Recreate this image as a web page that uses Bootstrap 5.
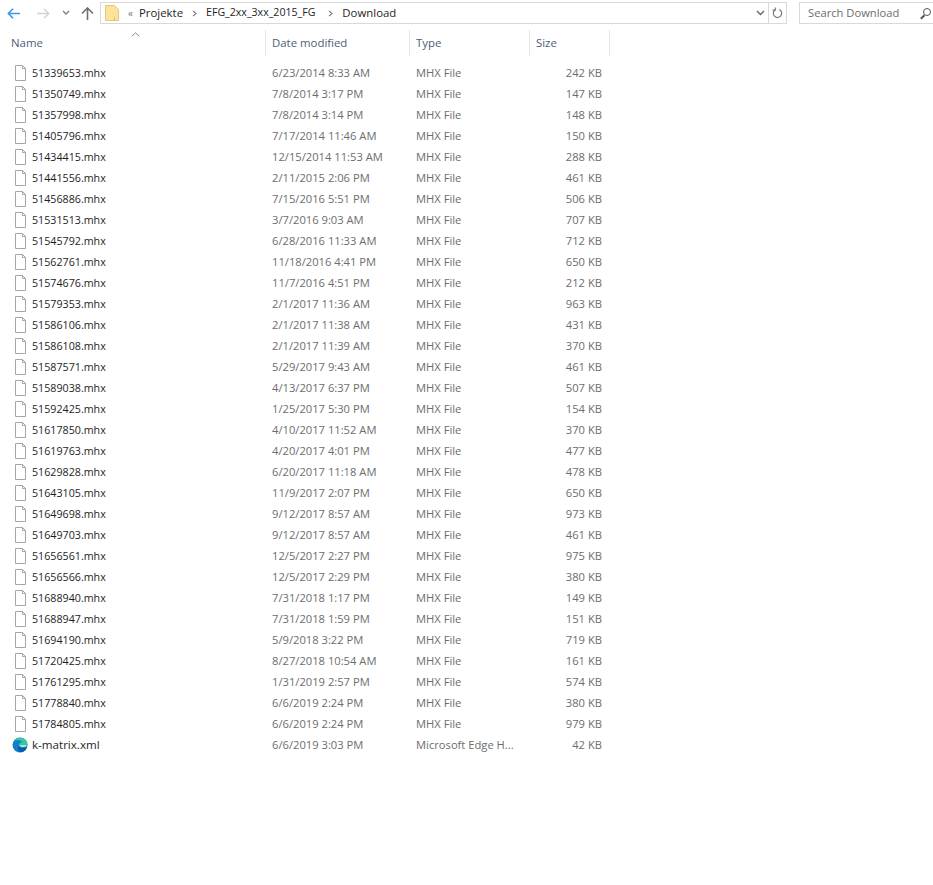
<!DOCTYPE html>
<html lang="en">
<head>
  <meta charset="UTF-8">
  <title>Download</title>
  <link href="https://cdn.jsdelivr.net/npm/bootstrap@5.3.3/dist/css/bootstrap.min.css" rel="stylesheet">
  <style>
    body {
      font-family: "Open Sans", "Noto Sans", sans-serif;
      font-size: 11.2px;
      color: #1e1e1e;
      background: #fff;
      overflow: hidden;
    }
    .toolbar { height: 26px; }
    .nav-btn { width: 20px; height: 21px; flex: none; }
    .nav-back { margin-left: 3px; }
    .nav-fwd { margin-left: 10px; }
    .nav-recent { width: 14px; margin-left: 6px; flex: none; }
    .nav-up { margin-left: 4px; }
    .addr-box {
      width: 687px; height: 22px; margin-left: 3px; padding-left: 4px; flex: none;
      border: 1px solid #d9d9d9; font-size: 11.4px;
    }
    .crumb-sep { color: #777; font-size: 10px; margin-left: 9px; margin-right: 6px; }
    .crumb-arrow { margin: 0 9px; }
    .crumb-long { font-size: 10.6px; margin-right: 4px; }
    .addr-tail { width: 34px; height: 100%; }
    .refresh-cell { width: 18px; height: 100%; border-left: 1px solid #d9d9d9; }
    .search-box {
      width: 134px; height: 22px; margin-left: 12px; padding-left: 8px; flex: none;
      border: 1px solid #d9d9d9; border-right: 0; color: #6d6d6d; font-size: 11.2px;
    }
    .search-text { width: 112px; flex: none; }
    .search-glyph { width: 11px; height: 11px; flex: none; position: relative; }
    .search-glyph::before {
      content: ""; position: absolute; right: 0; top: 0; width: 8px; height: 8px;
      border: 1.3px solid #555; border-radius: 50%;
    }
    .search-glyph::after {
      content: ""; position: absolute; left: 0; top: 8px; width: 5px; height: 1.6px;
      background: #555; transform: rotate(-45deg);
    }
    .head-row { height: 26px; margin-top: 4px; color: #4c607a; position: relative; font-size: 11.4px; }
    .sort-caret { position: absolute; left: 131px; top: 2px; }
    .col-name { width: 265px; padding-left: 11px; }
    .col-date { width: 144px; padding-left: 6px; border-left: 1px solid #e5e5e5; }
    .col-type { width: 120px; padding-left: 6px; border-left: 1px solid #e5e5e5; }
    .col-size { width: 81px; padding-left: 6px; border-left: 1px solid #e5e5e5; border-right: 1px solid #e5e5e5; }
    .head-row > div { height: 26px; line-height: 25px; }
    .file-list { margin-top: 6px; }
    .file-row { height: 21px; line-height: 21px; color: #6d6d6d; }
    .file-row .cell-name { width: 265px; padding-left: 12px; color: #1e1e1e; gap: 4px; font-size: 10.7px; }
    .file-row .cell-name span { padding-top: 1px; }
    .file-row .cell-name.wide-name { font-size: 11.6px; }
    .file-row .cell-name.wide-name span { padding-top: 0; }
    .file-row .cell-date { width: 144px; padding-left: 7px; }
    .file-row .cell-type { width: 120px; padding-left: 7px; }
    .file-row .cell-size { width: 73px; text-align: right; }
  </style>
</head>
<body>
  <div class="toolbar d-flex align-items-center">
    <div class="nav-btn nav-back d-flex align-items-center justify-content-center">
      <svg width="13" height="11" viewBox="0 0 13 11"><path d="M6 .7 1.300 5.500 6 10.300M2 5.500h11" fill="none" stroke="#3a97e6" stroke-width="1.5"/></svg>
    </div>
    <div class="nav-btn nav-fwd d-flex align-items-center justify-content-center">
      <svg width="13" height="11" viewBox="0 0 13 11"><path d="M7 .7l4.700 4.800L7 10.300M11 5.500H0" fill="none" stroke="#d4d4d4" stroke-width="1.5"/></svg>
    </div>
    <div class="nav-recent d-flex align-items-center justify-content-center">
      <svg width="8" height="6" viewBox="0 0 8 6"><path d="M1 1l3 3 3-3" fill="none" stroke="#7d7d7d" stroke-width="1.3"/></svg>
    </div>
    <div class="nav-btn nav-up d-flex align-items-center justify-content-center">
      <svg width="13" height="13" viewBox="0 0 13 13"><path d="M1 6.500 6.500 1 12 6.500M6.500 1.500V13" fill="none" stroke="#6f6f6f" stroke-width="1.6"/></svg>
    </div>
    <div class="addr-box d-flex align-items-center">
      <svg width="14" height="16" viewBox="0 0 14 16"><path d="M.5.500h9l4 4v11H.5z" fill="#fde39a" stroke="#e3c878"/><path d="M9.500 12.500v3" stroke="#e3b95c"/></svg>
      <span class="crumb-sep">&laquo;</span>
      <span>Projekte</span>
      <svg class="crumb-arrow" width="5" height="7" viewBox="0 0 5 7"><path d="M1 .8 4 3.500 1 6.200" fill="none" stroke="#777" stroke-width="1.1"/></svg>
      <span class="crumb-long">EFG_2xx_3xx_2015_FG</span>
      <svg class="crumb-arrow" width="5" height="7" viewBox="0 0 5 7"><path d="M1 .8 4 3.500 1 6.200" fill="none" stroke="#777" stroke-width="1.1"/></svg>
      <span>Download</span>
      <div class="addr-tail ms-auto d-flex align-items-center">
        <div class="flex-grow-1 d-flex justify-content-center">
          <svg width="9" height="6" viewBox="0 0 9 6"><path d="M1 1l3.500 3.500L8 1" fill="none" stroke="#666" stroke-width="1.4"/></svg>
        </div>
        <div class="refresh-cell d-flex align-items-center justify-content-center">
          <svg width="11" height="12" viewBox="0 0 11 12"><path d="M3.600 2.600A4.200 4.200 0 1 0 7.400 2.600M3.300 .4v2.800H.6" fill="none" stroke="#7a7a7a" stroke-width="1.2"/></svg>
        </div>
      </div>
    </div>
    <div class="search-box d-flex align-items-center">
      <span class="search-text">Search Download</span>
      <div class="search-glyph"></div>
    </div>
  </div>

  <div class="head-row d-flex">
    <svg class="sort-caret" width="9" height="5" viewBox="0 0 9 5"><path d="M.7 4.300 4.500.8l3.800 3.500" fill="none" stroke="#8a8a8a"/></svg>
    <div class="col-name">Name</div>
    <div class="col-date">Date modified</div>
    <div class="col-type">Type</div>
    <div class="col-size">Size</div>
  </div>

  <div class="file-list" id="fileList"></div>

  <script>
    const files = [
      ["51339653.mhx", "6/23/2014 8:33 AM", "242 KB"],
      ["51350749.mhx", "7/8/2014 3:17 PM", "147 KB"],
      ["51357998.mhx", "7/8/2014 3:14 PM", "148 KB"],
      ["51405796.mhx", "7/17/2014 11:46 AM", "150 KB"],
      ["51434415.mhx", "12/15/2014 11:53 AM", "288 KB"],
      ["51441556.mhx", "2/11/2015 2:06 PM", "461 KB"],
      ["51456886.mhx", "7/15/2016 5:51 PM", "506 KB"],
      ["51531513.mhx", "3/7/2016 9:03 AM", "707 KB"],
      ["51545792.mhx", "6/28/2016 11:33 AM", "712 KB"],
      ["51562761.mhx", "11/18/2016 4:41 PM", "650 KB"],
      ["51574676.mhx", "11/7/2016 4:51 PM", "212 KB"],
      ["51579353.mhx", "2/1/2017 11:36 AM", "963 KB"],
      ["51586106.mhx", "2/1/2017 11:38 AM", "431 KB"],
      ["51586108.mhx", "2/1/2017 11:39 AM", "370 KB"],
      ["51587571.mhx", "5/29/2017 9:43 AM", "461 KB"],
      ["51589038.mhx", "4/13/2017 6:37 PM", "507 KB"],
      ["51592425.mhx", "1/25/2017 5:30 PM", "154 KB"],
      ["51617850.mhx", "4/10/2017 11:52 AM", "370 KB"],
      ["51619763.mhx", "4/20/2017 4:01 PM", "477 KB"],
      ["51629828.mhx", "6/20/2017 11:18 AM", "478 KB"],
      ["51643105.mhx", "11/9/2017 2:07 PM", "650 KB"],
      ["51649698.mhx", "9/12/2017 8:57 AM", "973 KB"],
      ["51649703.mhx", "9/12/2017 8:57 AM", "461 KB"],
      ["51656561.mhx", "12/5/2017 2:27 PM", "975 KB"],
      ["51656566.mhx", "12/5/2017 2:29 PM", "380 KB"],
      ["51688940.mhx", "7/31/2018 1:17 PM", "149 KB"],
      ["51688947.mhx", "7/31/2018 1:59 PM", "151 KB"],
      ["51694190.mhx", "5/9/2018 3:22 PM", "719 KB"],
      ["51720425.mhx", "8/27/2018 10:54 AM", "161 KB"],
      ["51761295.mhx", "1/31/2019 2:57 PM", "574 KB"],
      ["51778840.mhx", "6/6/2019 2:24 PM", "380 KB"],
      ["51784805.mhx", "6/6/2019 2:24 PM", "979 KB"],
      ["k-matrix.xml", "6/6/2019 3:03 PM", "42 KB", "Microsoft Edge H..."]
    ];

    const pageIcon = `<svg width="16" height="16" viewBox="0 0 16 16"><path d="M3.500.5h7l3 3v12h-10z" fill="#fff" stroke="#a6a6a6"/><path d="M10.500.5v3h3" fill="none" stroke="#a6a6a6"/></svg>`;
    const edgeIcon = `<svg width="16" height="16" viewBox="0 0 16 16"><circle cx="8" cy="8" r="7.500" fill="#1080c8"/><path d="M1.500 4.500C4 .2 11 -.6 14.300 3.600c1.400 1.800 1.500 4.600.7 5.900H6.600C6.300 6.500 9 5 10.500 5 7.500 2.800 3.500 3 1.500 4.500z" fill="#3cc6a0"/><path d="M6.600 8.200c.2 2.600 4 3.700 8.300 1.900-.6 2.400-2.300 4.300-4.500 5-3.500.6-6-2.600-3.800-6.900z" fill="#0b5cab"/><path d="M7.800 8.400h6.800c-.4 1.300-5.400 2.300-6.800 0z" fill="#fff"/></svg>`;

    document.getElementById("fileList").innerHTML = files.map(f => `
      <div class="file-row d-flex">
        <div class="cell-name ${f[3] ? "wide-name" : ""} d-flex align-items-center">${f[3] ? edgeIcon : pageIcon}<span>${f[0]}</span></div>
        <div class="cell-date">${f[1]}</div>
        <div class="cell-type">${f[3] || "MHX File"}</div>
        <div class="cell-size">${f[2]}</div>
      </div>`).join("");
  </script>
  <script src="https://cdn.jsdelivr.net/npm/bootstrap@5.3.3/dist/js/bootstrap.bundle.min.js"></script>
</body>
</html>
